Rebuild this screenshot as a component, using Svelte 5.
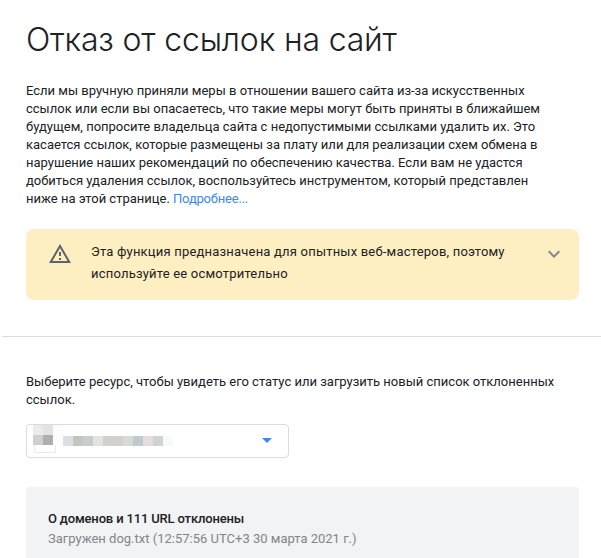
<script>
  const pixels = [
    { color: '#ebebeb' }, { color: '#e3e3e3' }, { color: '#fcfcfc' },
    { color: '#cfcfcf' }, { color: '#b0adad' }, { color: '#fcfcfc' }
  ];
  const nameBlocks = ['#dcdee3', '#c4c5bd', '#c5cdcf', '#e2e4e3', '#d3d0cd', '#d3cfcc', '#d8dad5', '#c0c8d0', '#e5dcdf', '#cfd4d1', '#f7f9fc', '#ffffff'];
</script>

<div class="page">
  <section class="intro">
    <h1>Отказ от ссылок на сайт</h1>
    <p class="lead">
      Если мы вручную приняли меры в отношении вашего сайта из-за искусственных ссылок или если вы опасаетесь, что такие меры могут быть приняты в ближайшем будущем, попросите владельца сайта с недопустимыми ссылками удалить их. Это касается ссылок, которые размещены за плату или для реализации схем обмена в нарушение наших рекомендаций по обеспечению качества. Если вам не удастся добиться удаления ссылок, воспользуйтесь инструментом, который представлен ниже на этой странице. <a href="#more">Подробнее...</a>
    </p>
    <div class="warning">
      <svg class="warn-icon" width="24" height="24" viewBox="0 0 24 24"><path fill="#5f6368" d="M1 21h22L12 2 1 21zm3.47-2L12 6l7.53 13H4.47zM11 16h2v2h-2zm0-6h2v4h-2z"/></svg>
      <div class="warn-text">Эта функция предназначена для опытных веб-мастеров, поэтому используйте ее осмотрительно</div>
      <svg class="chevron" width="24" height="24" viewBox="0 0 24 24"><path fill="#80868b" d="M16.59 8.59 12 13.17 7.41 8.59 6 10l6 6 6-6z"/></svg>
    </div>
  </section>

  <section class="resource">
    <p class="pick">Выберите ресурс, чтобы увидеть его статус или загрузить новый список отклоненных ссылок.</p>
    <div class="select">
      <div class="favicon">
        <div class="pixels">
          {#each pixels as p}<i style="background: {p.color}"></i>{/each}
        </div>
      </div>
      <div class="blur-name">
        {#each nameBlocks as c}<i style="background: {c}"></i>{/each}
      </div>
      <span class="arrow"></span>
    </div>
    <div class="status">
      <div class="count">О доменов и 111 URL отклонены</div>
      <div class="file">Загружен dog.txt (12:57:56 UTC+3 30 марта 2021 г.)</div>
    </div>
  </section>
</div>

<style>
  :global(body) {
    margin: 0;
    background: #fff;
  }

  .page {
    height: 558px;
    overflow: hidden;
    margin-left: 2px;
    font-family: Roboto, "Liberation Sans", sans-serif;
    color: #202124;
    position: relative;
  }

  .page::before {
    content: "";
    position: absolute;
    left: -2px;
    top: 0;
    bottom: 0;
    width: 2px;
    background: repeating-linear-gradient(45deg, #dadce0 0 1px, #fff 1px 2px);
  }

  .intro {
    padding: 20px 22px 0 24px;
    height: 316px;
    border-bottom: 1px solid #dadce0;
  }

  h1 {
    margin: 0;
    font-family: Inter, sans-serif;
    font-weight: 300;
    font-size: 32px;
    line-height: 40px;
    letter-spacing: -0.17px;
  }

  .lead {
    margin: 22px 24px 0 0;
    font-size: 13px;
    line-height: 18px;
    color: #202124;
  }

  a {
    color: #4285f4;
    text-decoration: none;
    letter-spacing: -0.2px;
  }

  .warning {
    display: flex;
    align-items: flex-start;
    margin-top: 21px;
    height: 71px;
    padding: 0 13px 0 22px;
    background: #feefc3;
    border-radius: 8px;
  }

  .warn-icon {
    margin-top: 13px;
    flex: none;
  }

  .warn-text {
    flex: 1;
    margin: 12px 24px 0 19px;
    font-size: 13px;
    line-height: 22px;
    letter-spacing: 0.2px;
  }

  .chevron {
    margin-top: 13px;
    flex: none;
  }

  .resource {
    padding: 36px 22px 0 24px;
  }

  .pick {
    margin: 0;
    font-size: 13px;
    line-height: 18px;
  }

  .select {
    display: flex;
    align-items: center;
    width: 261px;
    height: 32px;
    margin-top: 15px;
    border: 1px solid #dadce0;
    border-radius: 4px;
    position: relative;
  }

  .favicon {
    width: 20px;
    height: 20px;
    margin: 0 0 0 7px;
    border: 1px solid #e8e8e8;
    border-top: none;
    border-radius: 2px;
    position: relative;
    top: 1px;
  }

  .pixels {
    display: grid;
    grid-template-columns: repeat(3, 10px);
    grid-auto-rows: 10px;
    margin: -7px 0 0 -2px;
    width: 30px;
  }

  .pixels i, .blur-name i {
    display: block;
  }

  .blur-name {
    display: flex;
    height: 10px;
    margin-left: 7px;
  }

  .blur-name i {
    width: 10px;
    height: 10px;
  }

  .arrow {
    position: absolute;
    right: 16px;
    top: 13px;
    width: 0;
    height: 0;
    border-left: 5px solid transparent;
    border-right: 5px solid transparent;
    border-top: 5px solid #4285f4;
  }

  .status {
    margin-top: 29px;
    padding: 22px;
    height: 80px;
    background: #f1f3f4;
    border-radius: 4px;
  }

  .count {
    font-size: 13px;
    line-height: 20px;
    font-weight: 500;
    letter-spacing: -0.16px;
  }

  .file {
    font-size: 13px;
    line-height: 20px;
    color: #80868b;
  }
</style>
